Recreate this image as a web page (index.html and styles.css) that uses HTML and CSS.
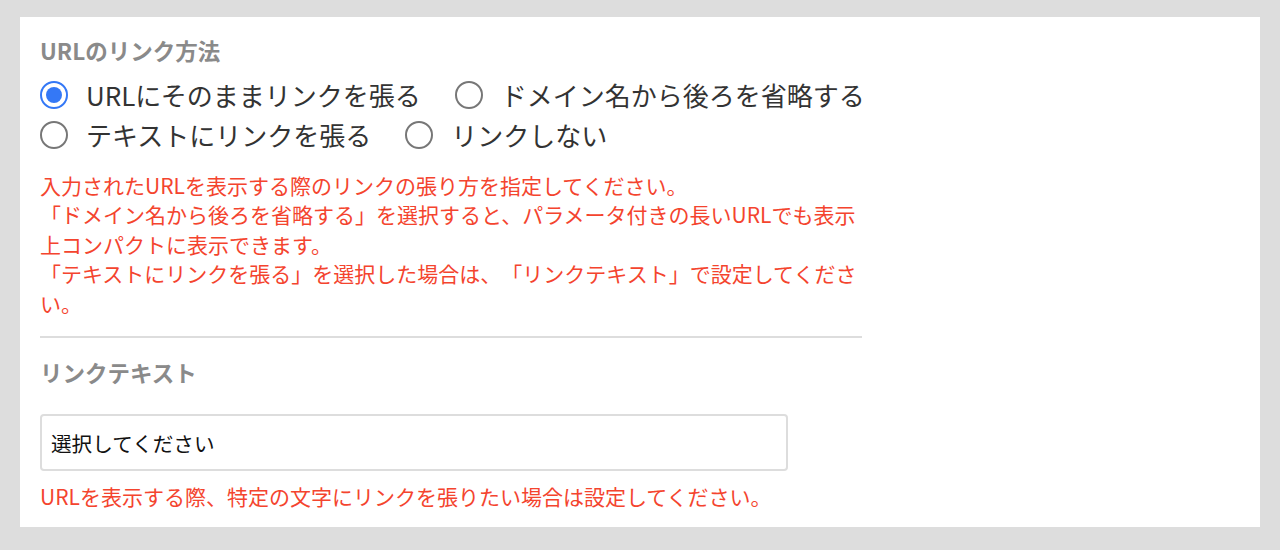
FILE: index.html
```html
<!DOCTYPE html>
<html lang="ja">
<head>
<meta charset="utf-8">
<link rel="stylesheet" href="styles.css">
</head>
<body>
<div class="panel">
  <div class="content">
    <h2 class="label">URLのリンク方法</h2>
    <div class="radios">
      <label class="radio"><span class="dot checked"></span><span class="text">URLにそのままリンクを張る</span></label>
      <label class="radio"><span class="dot"></span><span class="text">ドメイン名から後ろを省略する</span></label>
      <label class="radio"><span class="dot"></span><span class="text">テキストにリンクを張る</span></label>
      <label class="radio"><span class="dot"></span><span class="text">リンクしない</span></label>
    </div>
    <p class="note">入力されたURLを表示する際のリンクの張り方を指定してください。<br>「ドメイン名から後ろを省略する」を選択すると、パラメータ付きの長いURLでも表示上コンパクトに表示できます。<br>「テキストにリンクを張る」を選択した場合は、「リンクテキスト」で設定してください。</p>
    <hr class="divider">
    <h2 class="label label2">リンクテキスト</h2>
    <div class="input">選択してください</div>
    <p class="note note2">URLを表示する際、特定の文字にリンクを張りたい場合は設定してください。</p>
  </div>
</div>
</body>
</html>
```
FILE: styles.css
```css
html, body {
  margin: 0;
  padding: 0;
  background: #dddddd;
}
body {
  padding: 17px 20px 23px;
  font-family: "Noto Sans CJK JP", "Noto Sans", sans-serif;
}
.panel {
  background: #ffffff;
  padding: 18px 20px 16px;
}
.content {
  width: 822px;
}
.label {
  margin: 0;
  font-size: 22.5px;
  line-height: 30px;
  font-weight: 700;
  color: #8a8a8a;
}
.radios {
  display: flex;
  flex-wrap: wrap;
  width: 900px;
  margin-top: 10px;
}
.radio {
  display: flex;
  align-items: center;
  height: 40px;
  margin-right: 34px;
  color: #333333;
  font-size: 26px;
}
.dot {
  box-sizing: border-box;
  width: 28px;
  height: 28px;
  border: 2px solid #777777;
  border-radius: 50%;
  margin-right: 18px;
  position: relative;
}
.dot.checked {
  border-color: #3478f6;
}
.dot.checked::after {
  content: "";
  position: absolute;
  left: 4px;
  top: 4px;
  width: 16px;
  height: 16px;
  border-radius: 50%;
  background: #3478f6;
}
.text {
  line-height: 40px;
}
.note {
  margin: 16px 0 0;
  color: #f4442e;
  font-size: 21px;
  line-height: 29.4px;
  text-spacing-trim: space-all;
}
.divider {
  border: 0;
  height: 2px;
  background: #dddddd;
  margin: 18px 0 0;
}
.label2 {
  margin-top: 19px;
}
.input {
  box-sizing: border-box;
  width: 748px;
  height: 57px;
  margin-top: 27px;
  border: 2px solid #dddddd;
  border-radius: 4px;
  padding: 0 9px;
  display: flex;
  align-items: center;
  font-size: 20.6px;
  color: #111111;
}
.note2 {
  margin-top: 11px;
}
```
